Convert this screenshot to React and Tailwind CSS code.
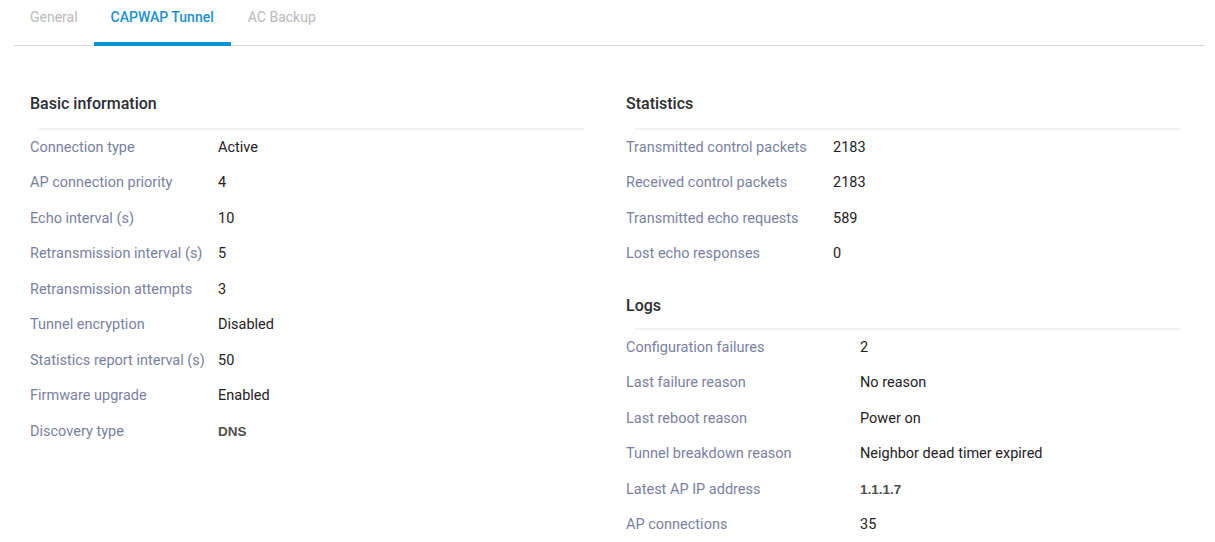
import React from "react";

const font = { fontFamily: "Roboto, 'Noto Sans', sans-serif" };

function Row({ label, value, labelW, arial }) {
  return (
    <div className="flex h-[35.5px] items-center">
      <div className={`${labelW} shrink-0 text-[14.5px] text-[#7a7f9f]`}>{label}</div>
      {arial ? (
        <div className="text-[13.5px] font-bold text-[#505050]" style={{ fontFamily: "'Liberation Sans', Arial, sans-serif" }}>
          {value}
        </div>
      ) : (
        <div className="text-[14.5px] font-normal text-[#1f2126]">{value}</div>
      )}
    </div>
  );
}

function Section({ title, rows, labelW, className = "", lineMt = "mt-[11px]" }) {
  return (
    <div className={className}>
      <div className="flex h-[26px] items-center text-[16px] font-medium text-[#2b2d33]">{title}</div>
      <div className={`ml-[9px] ${lineMt} h-[2px] bg-[#f0f0f2]`} />
      <div>
        {rows.map((r) => (
          <Row key={r[0]} label={r[0]} value={r[1]} arial={r[2]} labelW={labelW} />
        ))}
      </div>
    </div>
  );
}

export default function App() {
  const basic = [
    ["Connection type", "Active"],
    ["AP connection priority", "4"],
    ["Echo interval (s)", "10"],
    ["Retransmission interval (s)", "5"],
    ["Retransmission attempts", "3"],
    ["Tunnel encryption", "Disabled"],
    ["Statistics report interval (s)", "50"],
    ["Firmware upgrade", "Enabled"],
    ["Discovery type", "DNS", true],
  ];
  const stats = [
    ["Transmitted control packets", "2183"],
    ["Received control packets", "2183"],
    ["Transmitted echo requests", "589"],
    ["Lost echo responses", "0"],
  ];
  const logs = [
    ["Configuration failures", "2"],
    ["Last failure reason", "No reason"],
    ["Last reboot reason", "Power on"],
    ["Tunnel breakdown reason", "Neighbor dead timer expired"],
    ["Latest AP IP address", "1.1.1.7", true],
    ["AP connections", "35"],
  ];
  return (
    <div className="h-[542px] w-[1215px] overflow-hidden bg-white" style={font}>
      <div className="ml-[14px] mr-[10px] flex h-[46px] border-b border-[#d9d9d9]">
        <div className="flex h-full items-start px-[16px] pt-[7px] text-[14px] text-[#b9b9b9]">General</div>
        <div className="relative flex h-full items-start px-[17px] pt-[7px] text-[14px] font-medium text-[#1a8fd0]">
          CAPWAP Tunnel
          <div className="absolute bottom-[-1px] left-0 right-0 h-[4px] bg-[#0096d6]" />
        </div>
        <div className="flex h-full items-start px-[17px] pt-[7px] text-[14px] text-[#b9b9b9]">AC Backup</div>
      </div>
      <div className="ml-[30px] mt-[45px] grid w-[1150px] grid-cols-[554px_554px] gap-x-[42px]">
        <Section title="Basic information" rows={basic} labelW="w-[188px]" />
        <div>
          <Section title="Statistics" rows={stats} labelW="w-[207px]" />
          <Section title="Logs" rows={logs} labelW="w-[234px]" className="mt-[21px]" lineMt="mt-[9px]" />
        </div>
      </div>
    </div>
  );
}
